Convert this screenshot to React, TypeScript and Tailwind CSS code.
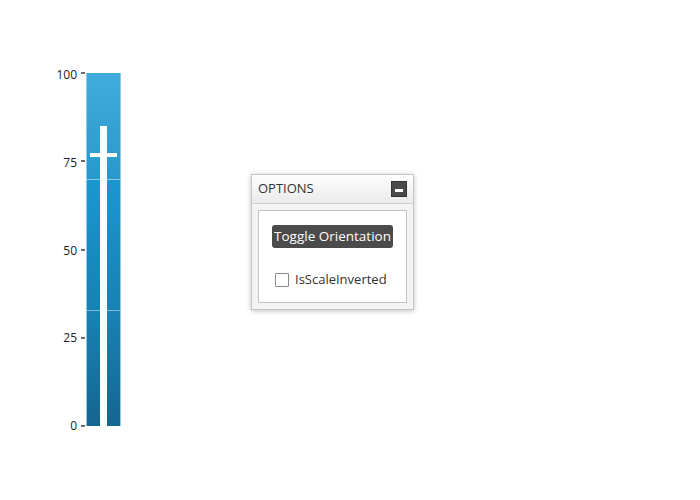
import { useState } from "react";

// scale labels, top to bottom
const labels = ["100", "75", "50", "25", "0"];

function Gauge() {
  return (
    <div className="flex mt-[73px] ml-[52px]">
      <div className="flex flex-col justify-between h-[353px] w-[25px] text-[12px] text-[#222]">
        {labels.map((l) => (
          <div key={l} className="h-0 flex items-center justify-end pt-[2px]">
            {l}
          </div>
        ))}
      </div>
      <div className="flex flex-col justify-between h-[353px] w-[4px] ml-[4px] mr-[1px]">
        {labels.map((l) => (
          <div key={l} className="h-0 flex items-center">
            <div className="w-[4px] h-[2px] bg-[#6b6b6b]" />
          </div>
        ))}
      </div>
      <div className="relative w-[35px] h-[353px] flex flex-col border-x border-[#8fcbe6]">
        <div className="h-[106px] bg-gradient-to-b from-[#41acdc] to-[#2898cc]" />
        <div className="h-[1px] bg-[#8cccea]" />
        <div className="h-[130px] bg-gradient-to-b from-[#1a97d1] to-[#1781b4]" />
        <div className="h-[1px] bg-[#7dbbd8]" />
        <div className="flex-1 bg-gradient-to-b from-[#1883b6] to-[#14668f]" />
        {/* track */}
        <div className="absolute left-[13px] top-[53px] bottom-0 w-[7px] bg-white" />
        {/* thumb */}
        <div className="absolute left-[3px] top-[80px] w-[27px] h-[4px] bg-white" />
      </div>
    </div>
  );
}

function OptionsPanel() {
  const [checked, setChecked] = useState(false);
  return (
    <div className="mt-[174px] ml-[130px] w-[163px] h-[136px] border border-[#c6c6c6] bg-[#f4f4f4] shadow-[0_1px_5px_rgba(0,0,0,0.25)] flex flex-col">
      <div className="h-[29px] flex items-center justify-between pl-[6px] pr-[6px] bg-gradient-to-b from-[#fdfdfd] to-[#ebebeb] border-b border-[#cfcfcf]">
        <span className="text-[13px] text-[#333]">OPTIONS</span>
        <div className="w-[16px] h-[16px] bg-[#4a4a4a] border border-[#333] flex items-center justify-center">
          <div className="w-[8px] h-[3px] bg-white mt-[3px]" />
        </div>
      </div>
      <div className="flex-1 px-[6px] pt-[6px] pb-[6px] flex">
        <div className="flex-1 border border-[#c4c4c4] bg-white flex flex-col items-center">
          <button className="mt-[14px] h-[23px] px-[2px] rounded-[3px] bg-[#4b4b4b] text-white text-[13.5px] leading-none whitespace-nowrap">
            Toggle Orientation
          </button>
          <label className="self-start ml-[16px] mt-[22px] flex items-center gap-[6px] text-[13px] text-[#333]">
            <span
              onClick={() => setChecked(!checked)}
              className="w-[14px] h-[14px] border border-[#8a8a8a] bg-white rounded-[1px]"
            />
            IsScaleInverted
          </label>
        </div>
      </div>
    </div>
  );
}

export default function App() {
  return (
    <div
      className="w-[700px] h-[500px] bg-white flex items-start"
      style={{ fontFamily: '"Open Sans", "Noto Sans", sans-serif' }}
    >
      <Gauge />
      <OptionsPanel />
    </div>
  );
}
